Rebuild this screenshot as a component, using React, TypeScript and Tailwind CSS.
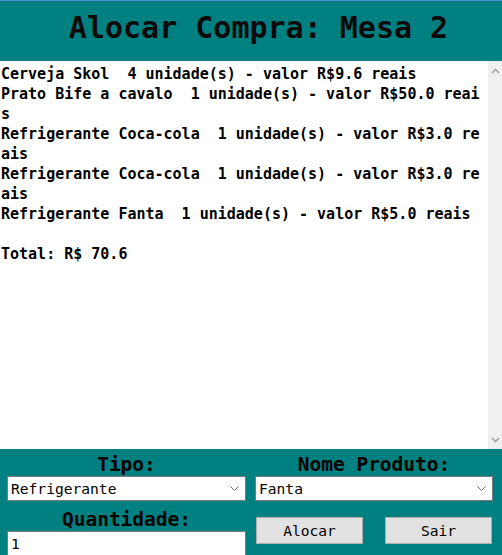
const mono = "font-['DejaVu_Sans_Mono','Liberation_Mono',monospace]";

const lines = [
  "Cerveja Skol  4 unidade(s) - valor R$9.6 reais",
  "Prato Bife a cavalo  1 unidade(s) - valor R$50.0 reai",
  "s",
  "Refrigerante Coca-cola  1 unidade(s) - valor R$3.0 re",
  "ais",
  "Refrigerante Coca-cola  1 unidade(s) - valor R$3.0 re",
  "ais",
  "Refrigerante Fanta  1 unidade(s) - valor R$5.0 reais",
  "",
  "Total: R$ 70.6",
];

function Chevron({ up }: { up?: boolean }) {
  return (
    <svg width="9" height="6" viewBox="0 0 9 6" className="block">
      <path
        d={up ? "M1 5 L4.5 1.5 L8 5" : "M1 1 L4.5 4.5 L8 1"}
        fill="none"
        stroke="currentColor"
        strokeWidth="1.6"
      />
    </svg>
  );
}

function Select({ value }: { value: string }) {
  return (
    <div className="h-[25px] border border-[#7a7a7a] bg-white flex items-center justify-between pl-[3px] pr-[6px] text-[14.6px] text-black">
      <span>{value}</span>
      <span className="text-[#6d6d6d]">
        <svg width="9" height="5" viewBox="0 0 9 5" className="block">
          <path d="M0.5 0.5 L4.5 4.5 L8.5 0.5" fill="none" stroke="currentColor" strokeWidth="1" />
        </svg>
      </span>
    </div>
  );
}

function Label({ text, top }: { text: string; top: string }) {
  return (
    <div className={`${top} text-center text-[19.5px] leading-[22px] font-bold text-black`}>{text}</div>
  );
}

export default function App() {
  return (
    <div className={`w-[502px] h-[555px] overflow-hidden bg-[#008080] ${mono}`}>
      <div className="h-[61px] border-t border-[#4b8fd6] pt-[12px] pl-[15px] text-center text-[30px] leading-[30px] font-bold text-[#0a0a0a]">
        Alocar Compra: Mesa 2
      </div>

      <div className="h-[388px] flex bg-white">
        <div className="w-[488px] pt-[3px] pl-[1px] text-[15px] leading-[20px] font-bold text-black">
          {lines.map((l, i) => (
            <div key={i} className="whitespace-pre h-[20px]">
              {l}
            </div>
          ))}
        </div>
        <div className="w-[14px] bg-[#f0f0f0] flex flex-col items-center justify-between pt-[7px] pb-[6px] text-[#a3a3a3]">
          <Chevron up />
          <Chevron />
        </div>
      </div>

      <div className="flex gap-[9px] pl-[7px]">
        <div className="w-[239px]">
          <Label text="Tipo:" top="pt-[5px]" />
          <Select value="Refrigerante" />
          <Label text="Quantidade:" top="pt-[8px]" />
          <div className="h-[25px] border border-[#7a7a7a] bg-white flex items-center pl-[3px] text-[14.6px] text-black">
            1
          </div>
        </div>
        <div className="w-[238px]">
          <Label text="Nome Produto:" top="pt-[5px]" />
          <Select value="Fanta" />
          <div className="flex justify-between mt-[16px] pl-[1px] pr-[1px]">
            <button className="w-[107px] h-[27px] bg-[#e1e1e1] border border-[#adadad] text-[14.6px] text-black">
              Alocar
            </button>
            <button className="w-[107px] h-[27px] bg-[#e1e1e1] border border-[#adadad] text-[14.6px] text-black">
              Sair
            </button>
          </div>
        </div>
      </div>
    </div>
  );
}
